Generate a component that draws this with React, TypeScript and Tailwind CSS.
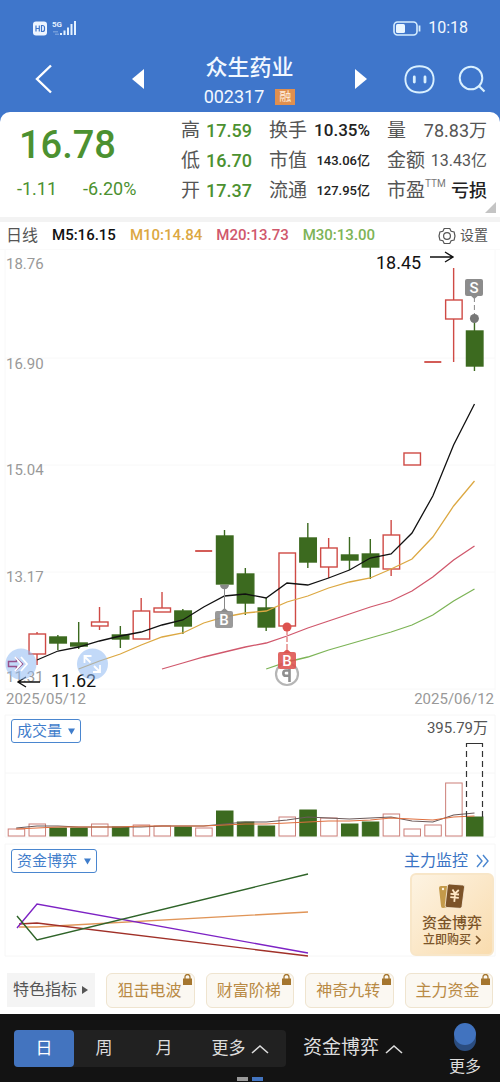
import type { ReactNode } from "react";

type Direction = "up" | "down" | "flat";

interface Candle {
	dir: Direction;
	high: number;
	top: number;
	bottom: number;
	low: number;
	volume: number;
}

const RED = "#cf4a45";
const GREEN = "#3c6a1f";

const STEP = 20.83;
const FIRST_X = 16.2;
const BAR_WIDTH = 17;
const VOLUME_BASE = 836;

const c = (
	dir: Direction,
	high: number,
	top: number,
	bottom: number,
	low: number,
	volume: number,
): Candle => ({ dir, high, top, bottom, low, volume });

const CANDLES: Candle[] = [
	c("up", 661, 661, 667, 667, 829),
	c("up", 632, 634, 654, 665, 824),
	c("down", 635, 637, 643, 650, 828),
	c("down", 622, 643, 646, 649, 828),
	c("up", 607, 622, 626, 630, 824),
	c("down", 626, 635, 639, 648, 827),
	c("up", 598, 611, 639, 639, 825),
	c("up", 592, 608, 612, 612, 826),
	c("down", 609, 611, 626, 634, 827),
	c("flat", 551, 551, 551, 551, 828),
	c("down", 530, 536, 584, 584, 811),
	c("down", 568, 574, 603, 615, 822),
	c("down", 598, 608, 627, 631, 826),
	c("up", 553, 553, 626, 626, 817),
	c("down", 523, 538, 562, 568, 810),
	c("up", 538, 548, 567, 578, 818),
	c("down", 537, 555, 560, 570, 824),
	c("down", 539, 554, 567, 579, 822),
	c("up", 520, 535, 569, 576, 814),
	c("up", 453, 453, 465, 465, 829),
	c("flat", 362, 362, 362, 362, 825),
	c("up", 268, 300, 319, 362, 783),
	c("down", 317, 331, 366, 371, 817),
];

const MA_LINES = [
	{
		color: "#111111",
		start: 1,
		values: [
			660, 651, 647, 641, 636, 632, 625, 620, 607, 596, 594, 598, 583, 585, 578,
			570, 558, 554, 533, 496, 445, 404,
		],
	},
	{
		color: "#dca842",
		start: 3,
		values: [
			669, 661, 654, 645, 637, 633, 623, 617, 613, 611, 602, 596, 588, 582, 578,
			569, 559, 537, 506, 481,
		],
	},
	{
		color: "#d0586c",
		start: 7,
		values: [
			669, 663, 657, 652, 647, 643, 636, 628, 621, 614, 607, 601, 591, 577, 560,
			546,
		],
	},
	{
		color: "#7db457",
		start: 12,
		values: [669, 662, 657, 650, 644, 638, 632, 625, 615, 601, 589],
	},
];

const VOLUME_LINES = [
	{
		color: "#6b5a5a",
		values: [
			828, 826, 826, 827, 827, 827, 827, 826, 826, 826, 824, 822, 822, 820, 817,
			818, 819, 818, 817, 821, 822, 815, 813,
		],
	},
	{
		color: "#e0703f",
		values: [
			829, 828, 827, 827, 827, 827, 826, 826, 826, 826, 825, 824, 824, 823, 822,
			821, 821, 820, 818, 819, 820, 817, 816,
		],
	},
];

const FUND_LINES = [
	{ color: "#e09558", points: "19,927 37,927 308,912" },
	{ color: "#a03028", points: "19,924 37,923 308,956" },
	{ color: "#7d22c4", points: "17,928 37,904 308,953" },
	{ color: "#2f6429", points: "17,916 37,940 308,874" },
];

const PRICE_TICKS = [
	{ label: "18.76", y: 269 },
	{ label: "16.90", y: 369 },
	{ label: "15.04", y: 475 },
	{ label: "13.17", y: 582 },
	{ label: "11.31", y: 682 },
];

const xAt = (i: number) => FIRST_X + i * STEP;

const toPoints = (values: number[], start = 0) =>
	values.map((v, i) => `${xAt(i + start).toFixed(1)},${v}`).join(" ");

const StatusBar = () => (
	<div className="flex h-14 items-center justify-between pl-[33px] pr-8">
		<div className="flex items-center gap-1">
			<svg width="15" height="15" viewBox="0 0 15 15">
				<rect width="14" height="14" y="0.5" rx="3" fill="#eef5ff" />
				<path
					d="M3 4.5v6M6.300 4.500v6M3 7.500h3.300M8.500 4.500v6h1a2 2 0 0 0 2-2v-2a2 2 0 0 0-2-2z"
					fill="none"
					stroke="#3f76cb"
					strokeWidth="1.2"
				/>
			</svg>
			<svg width="25" height="16" viewBox="0 0 25 16" fill="#e4f1ff">
				<text
					x="0"
					y="7"
					fontSize="8"
					fontWeight="700"
					fontFamily="Roboto, sans-serif"
				>
					5G
				</text>
				<path d="M8 13h2v2H8zM11.500 10.500h2V15h-2zM15 7.500h2V15h-2zM18.500 4h2v11h-2zM22 1h2v14h-2z" />
				<path d="M1 11h5v1.500H1zM3 13.500h4V15H3z" opacity=".3" />
			</svg>
		</div>
		<div className="flex items-center gap-[7px] text-base leading-5">
			<svg width="28" height="15" viewBox="0 0 28 15">
				<rect
					x="1"
					y="1"
					width="23"
					height="13"
					rx="3.5"
					fill="none"
					stroke="#d5edff"
					strokeWidth="1.6"
				/>
				<rect x="3" y="3" width="9" height="9" rx="1.500" fill="#eaf6ff" />
				<path d="M26.500 4.500v6" stroke="#d5edff" strokeWidth="1.8" />
			</svg>
			<span>10:18</span>
		</div>
	</div>
);

const TitleBar = () => (
	<header className="grid grid-cols-[144px_1fr_145px] items-start pb-[3px]">
		<div className="flex h-[46px] items-center justify-between pl-[35px]">
			<button type="button" aria-label="返回">
				<svg width="18" height="30" viewBox="0 0 18 30">
					<path
						d="M16 1.500 2 15l14 13.500"
						fill="none"
						stroke="#fff"
						strokeWidth="2.4"
					/>
				</svg>
			</button>
			<button type="button" aria-label="上一只">
				<svg width="12" height="20" viewBox="0 0 12 20">
					<path d="M12 0v20L0 10z" fill="#fff" />
				</svg>
			</button>
		</div>
		<div className="flex flex-col items-center">
			<h1 className="text-[22px] font-medium leading-6">众生药业</h1>
			<div className="mt-1 flex items-center gap-[11px] text-lg leading-[25px]">
				<span>002317</span>
				<span className="bg-[#e08f4e] px-1 text-[12px] leading-4 text-[#fff0df]">
					融
				</span>
			</div>
		</div>
		<div className="flex h-[46px] items-center">
			<button type="button" aria-label="下一只">
				<svg width="12" height="20" viewBox="0 0 12 20">
					<path d="M0 0v20l12-10z" fill="#fff" />
				</svg>
			</button>
			<button type="button" aria-label="助手" className="ml-[37px]">
				<svg width="31" height="29" viewBox="0 0 31 29" fill="none">
					<path
						d="M15.500 1.300C24 1.300 29.600 6 29.600 14.300S24 27.500 15.500 27.500 1.400 22.600 1.400 14.300 7 1.300 15.500 1.300z"
						stroke="#d9f0ff"
						strokeWidth="1.900"
					/>
					<path
						d="M10.300 12v5M21 12v5"
						stroke="#d9f0ff"
						strokeWidth="2.800"
						strokeLinecap="round"
					/>
				</svg>
			</button>
			<button type="button" aria-label="搜索" className="ml-[23px]">
				<svg width="28" height="28" viewBox="0 0 28 28" fill="none">
					<circle cx="13" cy="13" r="11.300" stroke="#d9f0ff" strokeWidth="2" />
					<path d="m20.500 20.500 6 6" stroke="#d9f0ff" strokeWidth="2.200" />
				</svg>
			</button>
		</div>
	</header>
);

interface StatProps {
	label: ReactNode;
	className: string;
	children: ReactNode;
}

const Stat: React.FC<StatProps> = ({ label, className, children }) => (
	<div className="flex h-[30px] items-center justify-between whitespace-nowrap">
		<dt className="text-[19px] leading-[30px] text-[#555]">{label}</dt>
		<dd className={className}>{children}</dd>
	</div>
);

const Quote = () => (
	<section className="relative grid grid-cols-[1fr_71px_101px_100px] gap-x-[17px] rounded-t-[10px] bg-white pb-[11px] pr-[13px] pt-1">
		<div className="pl-[17px] text-[#4c9130]">
			<p className="pl-[2px] pt-[7px] text-[38px] font-medium leading-[44px]">
				16.78
			</p>
			<p className="flex gap-[26px] pt-[10px] text-lg leading-6">
				<span>-1.11</span>
				<span>-6.20%</span>
			</p>
		</div>
		<dl>
			<Stat label="高" className="text-lg font-medium text-[#4c9130]">
				17.59
			</Stat>
			<Stat label="低" className="text-lg font-medium text-[#4c9130]">
				16.70
			</Stat>
			<Stat label="开" className="text-lg font-medium text-[#4c9130]">
				17.37
			</Stat>
		</dl>
		<dl>
			<Stat label="换手" className="text-[17px] font-medium text-[#222]">
				10.35%
			</Stat>
			<Stat label="市值" className="text-[13px] font-medium text-[#222]">
				143.06亿
			</Stat>
			<Stat label="流通" className="text-[13px] font-medium text-[#222]">
				127.95亿
			</Stat>
		</dl>
		<dl>
			<Stat label="量" className="text-lg text-[#555]">
				78.83万
			</Stat>
			<Stat label="金额" className="text-base text-[#555]">
				13.43亿
			</Stat>
			<Stat
				label={
					<span className="flex items-start">
						市盈
						<span className="text-[10px] leading-4 text-[#777]">TTM</span>
					</span>
				}
				className="text-lg font-medium text-[#222]"
			>
				亏损
			</Stat>
		</dl>
		<svg
			className="absolute bottom-1 right-1"
			width="11"
			height="11"
			viewBox="0 0 11 11"
		>
			<path d="M11 0v11H0z" fill="#c4c4c4" />
		</svg>
	</section>
);

const Legend = () => (
	<div className="flex h-7 items-center gap-[14px] whitespace-nowrap border-b border-[#fafafa] pl-[6px] pr-3 text-[15px] font-medium">
		<span className="text-base font-normal text-[#555]">日线</span>
		<span className="text-[#111]">M5:16.15</span>
		<span className="text-[#dca842]">M10:14.84</span>
		<span className="text-[#d0586c]">M20:13.73</span>
		<span className="text-[#7db457]">M30:13.00</span>
		<button
			type="button"
			className="ml-auto flex items-center gap-1 text-[14px] font-normal text-[#555]"
		>
			<svg
				width="18"
				height="18"
				viewBox="0 0 18 18"
				fill="none"
				stroke="#555"
				strokeWidth="1.200"
			>
				<path d="M6.200 1.500h5.600l1.300 2.800 3 .6.900 4.100-.9 4.100-3 .6-1.300 2.800H6.200l-1.300-2.800-3-.6L1 9l.9-4.100 3-.6z" />
				<circle cx="9" cy="9" r="3.400" />
			</svg>
			设置
		</button>
	</div>
);

const CandleShape = ({ candle, x }: { candle: Candle; x: number }) => {
	const { dir, high, top, bottom, low } = candle;
	const left = x - BAR_WIDTH / 2;
	if (dir === "flat") {
		return (
			<path d={`M${left} ${top}h${BAR_WIDTH}`} stroke={RED} strokeWidth="1.8" />
		);
	}
	const color = dir === "up" ? RED : GREEN;
	return (
		<g stroke={color} strokeWidth="1.4">
			<path d={`M${x} ${high}V${top}M${x} ${bottom}V${low}`} />
			<rect
				x={left + 0.5}
				y={top}
				width={BAR_WIDTH - 0.5}
				height={bottom - top}
				fill={dir === "up" ? "none" : GREEN}
			/>
		</g>
	);
};

const Tag = ({
	x,
	y,
	color,
	text,
}: {
	x: number;
	y: number;
	color: string;
	text: string;
}) => (
	<g>
		<rect x={x - 9} y={y} width="18" height="17" rx="2" fill={color} />
		<text
			x={x}
			y={y + 14}
			fontSize="15"
			textAnchor="middle"
			fill="#fff"
			fontWeight="500"
		>
			{text}
		</text>
	</g>
);

const PriceChart = () => (
	<svg
		viewBox="0 250 500 440"
		className="block h-auto w-full"
		role="img"
		aria-label="日K线"
	>
		<path
			d="M5 358h490M5 465h490M5 572h490M5 689h490M5 250v440M495 250v440"
			stroke="#f8f8f8"
		/>
		<g fontSize="15" fill="#999">
			{PRICE_TICKS.map((tick) => (
				<text key={tick.label} x="6" y={tick.y}>
					{tick.label}
				</text>
			))}
		</g>
		{CANDLES.slice(1).map((candle, i) => (
			<CandleShape key={i} candle={candle} x={xAt(i + 1)} />
		))}
		{MA_LINES.map((line) => (
			<polyline
				key={line.color}
				points={toPoints(line.values, line.start)}
				fill="none"
				stroke={line.color}
				strokeWidth="1.3"
			/>
		))}

		{/* highest and lowest price markers */}
		<g fontSize="18" fill="#111">
			<text x="376" y="269">
				18.45
			</text>
			<text x="51" y="687">
				11.62
			</text>
		</g>
		<path
			d="M430 257h23M445 252l8 5-8 5M40 682H18M26 677l-8 5 8 5"
			fill="none"
			stroke="#111"
			strokeWidth="1.4"
		/>

		{/* trade tags */}
		<path d="M474.400 297v18" stroke="#888" strokeDasharray="5 3" />
		<path d="m470 295 4.400 4 4.400-4z" fill="#8c8c8c" />
		<circle cx="474.400" cy="318.500" r="4.500" fill="#777" />
		<Tag x={474} y={279} color="#8c8c8c" text="S" />
		<path d="M224.500 588v22" stroke="#888" />
		<path d="M220 584.700h9a4.500 4.500 0 0 1-9 0z" fill="#888" />
		<path d="m220 612 4.500-4 4.500 4z" fill="#8c8c8c" />
		<Tag x={224} y={611} color="#8c8c8ce0" text="B" />
		<circle
			cx="287"
			cy="674"
			r="11"
			fill="none"
			stroke="#b5b5b5"
			strokeWidth="2.200"
		/>
		<path
			d="M289.500 669v13M289.500 670.500h-3.500a2.300 2.300 0 0 0 0 5.300h3.500"
			fill="none"
			stroke="#8f8f8f"
			strokeWidth="2.600"
		/>
		<path d="M287 630v22" stroke="#d8504c" strokeDasharray="5 2" />
		<circle cx="287" cy="627" r="4.500" fill="#dd524e" />
		<path d="m282.500 653 4.500-4 4.500 4z" fill="#dd5a55" />
		<Tag x={287} y={652} color="#dd524ee0" text="B" />

		{/* floating pan and zoom handles */}
		<circle cx="21" cy="664" r="15.500" fill="#8fb9f2" opacity=".55" />
		<circle cx="92.500" cy="664" r="15.500" fill="#8fb9f2" opacity=".55" />
		<path
			d="M8.500 661.500h8v-3l6 5.500-6 5.500v-3h-8z"
			fill="none"
			stroke="#96508c"
			strokeWidth="1.500"
		/>
		<path
			d="m15 657 6 7-6 7M21 657l6 7-6 7M90.500 662.500l-6-6M84.500 663v-7h7M94 666l6 6M100 665v7h-7"
			fill="none"
			stroke="#fff"
			strokeWidth="1.800"
		/>
	</svg>
);

const IndicatorSelect = ({
	label,
	options,
	className,
}: {
	label: string;
	options: string[];
	className: string;
}) => (
	<label className="grid items-center">
		<select
			aria-label={label}
			className={`col-start-1 row-start-1 h-6 appearance-none rounded-[3px] border border-[#4a86cf] bg-white pl-[5px] text-[15px] leading-5 text-[#3f7dcb] ${className}`}
		>
			{options.map((option) => (
				<option key={option}>{option}</option>
			))}
		</select>
		<svg
			className="pointer-events-none col-start-1 row-start-1 mr-[6px] justify-self-end"
			width="7"
			height="7"
			viewBox="0 0 7 7"
		>
			<path d="M0 0.500h7L3.500 6.500z" fill="#3f7dcb" />
		</svg>
	</label>
);

const VolumePanel = () => (
	<section className="grid">
		<svg
			viewBox="0 708 500 130"
			className="col-start-1 row-start-1 block h-auto w-full"
			role="img"
			aria-label="成交量"
		>
			<path
				d="M5 715h490M5 773h490M5 837h490M5 715v122M495 715v122"
				fill="none"
				stroke="#f6f6f6"
			/>
			{CANDLES.map(({ dir, volume }, i) => (
				<rect
					key={i}
					x={xAt(i) - 8}
					y={volume}
					width="16.500"
					height={VOLUME_BASE - volume}
					fill={dir === "down" ? GREEN : "none"}
					stroke={dir === "down" ? GREEN : "#cc7f78"}
				/>
			))}
			{VOLUME_LINES.map((line) => (
				<polyline
					key={line.color}
					points={toPoints(line.values)}
					fill="none"
					stroke={line.color}
					strokeWidth="1.200"
				/>
			))}
			<path
				d="M466.500 817v-74M482.500 817v-74"
				stroke="#333"
				strokeWidth="1.200"
				strokeDasharray="6 4"
			/>
			<path d="M466 743.500h17" stroke="#333" />
		</svg>
		<div className="col-start-1 row-start-1 flex items-start justify-between pl-[11px] pr-3 pt-[11px]">
			<IndicatorSelect
				label="副图指标一"
				options={["成交量", "成交额"]}
				className="w-[70px]"
			/>
			<span className="text-[15px] leading-[18px] text-[#555]">395.79万</span>
		</div>
	</section>
);

const FundPanel = () => (
	<section className="grid">
		<svg
			viewBox="0 838 500 122"
			className="col-start-1 row-start-1 block h-auto w-full"
			role="img"
			aria-label="资金博弈"
		>
			<path
				d="M5 844h490M5 956h490M5 844v112M495 844v112"
				fill="none"
				stroke="#f6f6f6"
			/>
			{FUND_LINES.map((line) => (
				<polyline
					key={line.color}
					points={line.points}
					fill="none"
					stroke={line.color}
					strokeWidth="1.400"
				/>
			))}
		</svg>
		<div className="col-start-1 row-start-1 flex items-start justify-between pl-[11px] pr-[6px] pt-[11px]">
			<IndicatorSelect
				label="副图指标二"
				options={["资金博弈", "主力资金"]}
				className="w-[86px]"
			/>
			<div className="flex flex-col items-end">
				<a
					href="#monitor"
					className="flex items-center gap-2 pr-[5px] text-base leading-6 text-[#3a74c4]"
				>
					主力监控
					<svg
						width="13"
						height="14"
						viewBox="0 0 13 14"
						fill="none"
						stroke="#4a86d0"
						strokeWidth="1.400"
					>
						<path d="m1 1 5 6-5 6M7 1l5 6-5 6" />
					</svg>
				</a>
				<button
					type="button"
					className="flex h-[83px] w-[84px] flex-col items-center rounded-md border-2 border-[#f8e6c8] bg-linear-to-br from-[#fdf3e2] to-[#f9dcae] pt-2 text-[#7b5428]"
				>
					<svg width="26" height="27" viewBox="0 0 26 27">
						<path
							d="M2 3h9l-2 21-5 1a2 2 0 0 1-2-2L0 5a2 2 0 0 1 2-2z"
							fill="#c49a4a"
						/>
						<circle cx="4" cy="6" r="1.200" fill="#fdf3e2" />
						<path
							d="M10.500 1 23.500 2a2 2 0 0 1 2 2.300L23 23.500a2 2 0 0 1-2.200 1.800L8 24.500a2 2 0 0 1-1.800-2.300L8.500 2.800a2 2 0 0 1 2-1.800z"
							fill="#7c5328"
							stroke="#fdf0dc"
							strokeWidth=".8"
						/>
						<path
							d="m13.500 6.500 2.500 4 3.800-3.500M11.500 10.800l8.500.7M11.300 14.200l8.500.7M16 10.800l-.7 8"
							fill="none"
							stroke="#ffe9c6"
							strokeWidth="1.800"
						/>
					</svg>
					<span className="pt-1 text-[15px] font-medium leading-[18px]">
						资金博弈
					</span>
					<span className="flex items-center gap-1 text-[12px] font-medium leading-4">
						立即购买
						<svg width="6" height="10" viewBox="0 0 6 10">
							<path
								d="m1 1 4 4-4 4"
								fill="none"
								stroke="#7b5428"
								strokeWidth="1.600"
							/>
						</svg>
					</span>
				</button>
			</div>
		</div>
	</section>
);

const Chips = () => (
	<nav className="grid grid-cols-5 gap-[11px] px-[7px] pb-[6px] pt-[13px] text-base">
		<button
			type="button"
			className="flex h-[34px] items-center gap-[5px] whitespace-nowrap bg-[#f4f4f4] pl-[6px] text-[#555]"
		>
			特色指标
			<svg width="6" height="8" viewBox="0 0 6 8">
				<path d="M0 0v8l6-4z" fill="#555" />
			</svg>
		</button>
		{["狙击电波", "财富阶梯", "神奇九转", "主力资金"].map((name) => (
			<button
				key={name}
				type="button"
				className="relative flex h-[35px] items-center whitespace-nowrap rounded-md border border-[#efe4cf] bg-[#fbf8f2] pl-[10px] text-[#b98a45]"
			>
				{name}
				<svg
					className="absolute right-[2px] top-0"
					width="9"
					height="11"
					viewBox="0 0 9 11"
				>
					<path
						d="M2 5V3a2.500 2.500 0 0 1 5 0v2"
						fill="none"
						stroke="#a5762f"
						strokeWidth="1.300"
					/>
					<path d="M0 4.500h9V11H0z" fill="#a5762f" />
				</svg>
			</button>
		))}
	</nav>
);

const ChevronUp = () => (
	<svg width="18" height="10" viewBox="0 0 18 10">
		<path d="m1 9 8-7 8 7" fill="none" stroke="#ddd" strokeWidth="1.600" />
	</svg>
);

const BottomBar = () => (
	<footer className="flex flex-col bg-[#131313] pb-px pt-2 text-[#ddd]">
		<div className="flex justify-between pl-[14px] pr-[19px]">
			<div className="flex items-start gap-[17px] pt-2">
				<div className="flex h-[37px] w-[272px] items-stretch rounded-sm bg-[#212121] text-[17px]">
					<button
						type="button"
						className="w-[60px] rounded-sm bg-[#4374bf] text-white"
					>
						日
					</button>
					<button type="button" className="w-[60px]">
						周
					</button>
					<button type="button" className="w-[60px]">
						月
					</button>
					<button
						type="button"
						className="flex flex-1 items-center justify-center gap-[5px]"
					>
						更多
						<ChevronUp />
					</button>
				</div>
				<button
					type="button"
					className="flex h-[37px] items-center gap-[6px] whitespace-nowrap text-[19px]"
				>
					资金博弈
					<ChevronUp />
				</button>
			</div>
			<button
				type="button"
				className="flex flex-col items-center text-base leading-5"
			>
				<svg width="24" height="32" viewBox="0 0 24 32">
					<circle cx="12" cy="18" r="11" fill="#2b4d80" />
					<circle cx="12" cy="12" r="11" fill="#4173bf" />
				</svg>
				<span className="pt-[3px]">更多</span>
			</button>
		</div>
		<div className="flex justify-center gap-1">
			<span className="h-1 w-[11px] bg-[#999]" />
			<span className="h-1 w-[11px] bg-[#4374bf]" />
		</div>
	</footer>
);

export default function App() {
	return (
		<div className="bg-white font-[Roboto,'Noto_Sans_CJK_SC',sans-serif]">
			<div className="bg-[#3f76cb] text-[#f2f8ff]">
				<StatusBar />
				<TitleBar />
				<Quote />
			</div>
			<main>
				<div className="h-[5px] bg-[#f3f3f3]" />
				<Legend />
				<PriceChart />
				<div className="flex justify-between px-[6px] text-[15px] leading-[18px] text-[#999]">
					<time>2025/05/12</time>
					<time>2025/06/12</time>
				</div>
				<VolumePanel />
				<FundPanel />
				<Chips />
			</main>
			<BottomBar />
		</div>
	);
}
